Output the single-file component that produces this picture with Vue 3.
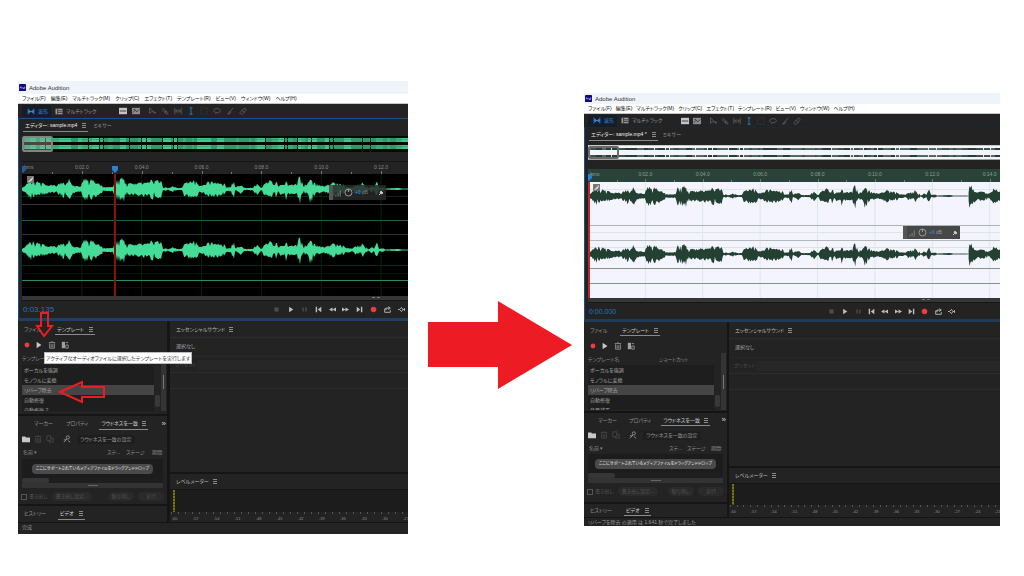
<script setup>
const envelope = [
  [0, 2], [3, 3], [7, 9], [12, 10], [20, 6], [25, 4], [32, 4], [37, 6], [40, 13], [43, 4], [47, 11], [51, 4], [55, 3],
  [59, 3], [61, 10], [65, 11], [72, 9], [79, 4], [82, 2], [91, 2], [93, 10], [102, 12], [105, 6], [112, 6], [120, 7],
  [127, 7], [129, 11], [133, 9], [139, 9], [141, 2], [147, 1], [151, 3], [155, 1], [160, 1], [162, 7], [169, 8], [174, 12],
  [177, 3], [183, 5], [186, 9], [195, 7], [203, 5], [206, 2], [209, 2], [211, 13], [213, 2], [219, 4], [222, 1],
  [231, 1], [234, 7], [239, 1], [243, 7], [250, 11], [256, 6], [260, 5], [264, 11], [267, 5], [274, 5],
  [278, 15], [281, 4], [285, 5], [288, 13], [292, 9], [296, 4], [303, 3], [311, 7], [317, 5], [321, 5], [324, 2],
  [331, 2], [335, 6], [337, 3], [340, 8], [343, 3], [345, 3], [346, 0], [350, 4], [352, 1], [355, 9], [357, 1],
  [361, 2], [364, 0], [376, 1], [380, 0], [395, 0]
]
const secondTake = [[396, 13], [398, 15], [401, 8], [405, 4], [409, 6], [414, 5], [418, 3], [422, 9], [427, 6], [432, 9]]

function wave(points, centre, sx, sy, seed) {
  let s = seed
  const rand = () => {
    s = (s * 16807) % 2147483647
    return s / 2147483647
  }
  const top = []
  const bottom = []
  let k = 0
  const last = points[points.length - 1][0]
  for (let x = points[0][0]; x <= last; x += 1) {
    while (k < points.length - 2 && points[k + 1][0] < x) k++
    const [x0, a0] = points[k]
    const [x1, a1] = points[k + 1]
    const dip = rand() < 0.15 ? 0.5 : 1
    const a = (a0 + ((a1 - a0) * (x - x0)) / (x1 - x0)) * sy * dip
    const up = a * (0.6 + 0.4 * rand()) + 0.3
    const down = a * (0.6 + 0.5 * rand()) + 0.3
    top.push(`${(x * sx).toFixed(1)},${(centre - up).toFixed(1)}`)
    bottom.unshift(`${(x * sx).toFixed(1)},${(centre + down).toFixed(1)}`)
  }
  return [...top, ...bottom].join(' ')
}

function stripes(seed) {
  const out = []
  let s = seed
  let x = 1
  while (x < 600) {
    s = (s * 16807) % 2147483647
    const w = 2 + (s % 7)
    out.push({ x, w, o: 0.75 + (s % 3) / 8 })
    x += w + (s % 4 === 0 ? 1 : 0)
  }
  return out
}

const darkLines = [
  { y: 22, c: '#0b2a0c' }, { y: 30, c: '#383838' }, { y: 46, c: '#1f5c40' }, { y: 60, c: '#303030' },
  { y: 91, c: '#0b2a0c' }, { y: 99, c: '#061506' }, { y: 106, c: '#2c8a5e' }, { y: 113, c: '#061506' }
]
const lightLines = [
  { y: 7, c: '#e0e6ec' }, { y: 43, c: '#aeb4b6' }, { y: 50, c: '#dde5e6' }, { y: 58, c: '#b3b8bc' },
  { y: 65, c: '#dbe6e2' }, { y: 86, c: '#8b938f' }, { y: 101, c: '#7d9488' }
]

const windows = [
  {
    id: 'before', file: 'エディター: sample.mp4', time: '0:03.135', steps: 6.45, levels: 11.6, band: 4,
    lines: darkLines, waves: [wave(envelope, 15, 1, 1, 77), wave(envelope, 76, 1, 1, 77)],
    playhead: 93, status: '完成', tooltip: true, last: '自動修復 2',
    ticks: ['0:02.0', '0:04.0', '0:06.0', '0:08.0', '0:10.0', '0:12.0']
  },
  {
    id: 'after', file: 'エディター: sample.mp4 *', time: '0:00.000', steps: 7.18, levels: 13.6, band: 2,
    lines: lightLines,
    waves: [
      wave(envelope, 14, 0.961, 0.85, 77), wave(secondTake, 14, 0.961, 0.85, 31),
      wave(envelope, 72, 0.961, 0.85, 77), wave(secondTake, 72, 0.961, 0.85, 31)
    ],
    playhead: 1, status: 'リバーブを除去 の適用 は 1.641 秒で完了しました', tooltip: false, last: '音量補正',
    ticks: ['0:02.0', '0:04.0', '0:06.0', '0:08.0', '0:10.0', '0:12.0', '0:14.0']
  }
]

const menus = ['ファイル(F)', '編集(E)', 'マルチトラック(M)', 'クリップ(C)', 'エフェクト(T)', 'テンプレート(R)', 'ビュー(V)', 'ウィンドウ(W)', 'ヘルプ(H)']
const templates = ['ボーカルを強調', 'モノラルに変換', 'リバーブ除去', '自動修復']
const levels = Array.from({ length: 14 }, (_, i) => i * 3 - 60)
const overview = stripes(4242)

const tools = [
  { name: '移動ツール', cls: '', d: 'M2 1v7l2-2h3zM7 7h3M8.500 5.500v3' },
  { name: '切り取りツール', cls: '', d: 'M2 1l5 5M1 3l5 5M6 5l3 3-2 1-2-2z' },
  { name: 'スリップツール', cls: '', d: 'M1 1v8M9 1v8M2 5h6M4 3L2 5l2 2M6 3l2 2-2 2' },
  { name: '時間選択ツール', cls: 'on', d: 'M3 1h4M3 9h4M5 1v8' },
  { name: '長方形選択', cls: 'faint', d: 'M1 1h2M5 1h2M9 1v2M9 5v2M9 9H7M5 9H3M1 9V7M1 5V3' },
  { name: 'なげなわ選択', cls: '', d: 'M3 7C-1 5 1 2 5 2s6 3 2 5H4c-1 0-1 2 0 2' },
  { name: 'ブラシ選択', cls: '', d: 'M9 1L5 6M5 5L2 9l3-1 1-2' },
  { name: 'スポット修復', cls: '', d: 'M2 6l4-4c2-1 4 1 2 3L4 9C2 9 0 8 2 6zM4 4l3 3' }
]
const transport = [
  { name: '停止', cls: 'off', d: 'M2 2h6v6H2z' },
  { name: '再生', cls: '', d: 'M3 1l6 4-6 4z' },
  { name: '一時停止', cls: 'off', d: 'M2 2h2v6H2zM6 2h2v6H6z' },
  { name: '先頭へ', cls: '', d: 'M1 1h2v8H1zM9 1v8L4 5z' },
  { name: '巻き戻し', cls: '', d: 'M5 2v6L0 5zM10 2v6L5 5z' },
  { name: '早送り', cls: '', d: 'M0 2v6l5-3zM5 2v6l5-3z' },
  { name: '末尾へ', cls: '', d: 'M7 1h2v8H7zM1 1v8l5-4z' },
  { name: '録音', cls: 'rec', d: 'M5 1a4 4 0 1 0 .1 0z' },
  { name: 'ループ', cls: 'line', d: 'M3 4H1v5h8V6M3 6V3h5M6 1l3 2-3 2' },
  { name: '選択範囲をスキップ', cls: 'line', d: 'M0 5h2M2 5l3-3 2 3-2 3zM7 5h3M9 3l1 2-1 2' }
]
</script>

<template>
  <main class="page">
    <template v-for="(w, wi) in windows" :key="w.id">
      <svg v-if="wi === 1" class="big-arrow" viewBox="0 0 144 88" aria-hidden="true">
        <path d="M0 21h70V0l74 44-74 44V66H0z" />
      </svg>
      <section class="app" :class="w.id">
        <header class="title">
          <svg viewBox="0 0 8 8"><rect width="8" height="8" rx="1" /><path d="M1 5l1-2 1 2M4.500 3.500v1.500h2V3" /></svg>
          <span>Adobe Audition</span>
        </header>
        <nav class="menu">
          <button v-for="m in menus" :key="m">{{ m }}</button>
        </nav>

        <div class="toolbar">
          <button class="mode active">
            <svg viewBox="0 0 10 10"><path d="M1 1v8M9 1v8M1 5h8M3 3v4M7 3v4" /></svg>波形
          </button>
          <button class="mode multi">
            <svg viewBox="0 0 10 10"><path class="solid" d="M0 1h10v8H0z" /><path class="cut" d="M3 4h7M3 6.500h7M3 1v8" /></svg>マルチトラック
          </button>
          <div class="tools">
            <button class="tool bright" aria-label="スペクトル周波数"><svg viewBox="0 0 10 10"><path class="solid" d="M0 1h10v8H0z" /><path class="cut" d="M1 5h8" /></svg></button>
            <button class="tool mid" aria-label="スペクトルピッチ"><svg viewBox="0 0 10 10"><path class="solid" d="M0 1h10v8H0z" /><path class="cut" d="M1 7l3-3 2 2 3-3M2 3h2" /></svg></button>
          </div>
          <div class="tools second">
            <button v-for="t in tools" :key="t.name" class="tool" :class="t.cls" :aria-label="t.name">
              <svg viewBox="0 0 10 10"><path :d="t.d" /></svg>
            </button>
          </div>
        </div>

        <div class="editor">
          <div class="tabs editor-tabs">
            <button class="tab current">{{ w.file }}<i class="burger"></i></button>
            <button class="tab dim">ミキサー</button>
          </div>
          <div class="overview">
            <svg width="100%" height="100%">
              <g v-for="(s, i) in overview" :key="i" :opacity="s.o">
                <rect :x="s.x" y="2" :width="s.w" :height="w.band" />
                <rect :x="s.x" y="9" :width="s.w" :height="w.band" />
              </g>
              <path d="M0 3.500h800M0 10.500h800" />
            </svg>
            <span class="view-box"></span>
          </div>
          <div class="ruler" :style="{ '--steps': w.steps }">
            <span class="hms">hms</span>
            <i class="half"></i>
            <span v-for="t in w.ticks" :key="t" class="tick">{{ t }}</span>
            <svg class="marker start" viewBox="0 0 6 7"><path d="M0 0h6v4L3 7 0 4z" /></svg>
            <svg v-if="w.id === 'before'" class="marker" viewBox="0 0 6 7" :style="{ left: w.playhead - 3 + 'px' }"><path d="M0 0h6v4L3 7 0 4z" /></svg>
          </div>
          <div class="wave">
            <svg width="100%" height="100%">
              <line v-for="n in 7" :key="n" class="grid" :x1="(n * 100) / w.steps + '%'" :x2="(n * 100) / w.steps + '%'" y1="0" y2="100%" />
              <line v-for="l in w.lines" :key="l.y" x1="0" x2="100%" :y1="l.y + 0.5" :y2="l.y + 0.5" :stroke="l.c" />
              <line v-for="y in w.id === 'before' ? [15, 76] : [14, 72]" :key="'c' + y" class="centre" x1="0" x2="100%" :y1="y" :y2="y" />
              <polygon v-for="(p, i) in w.waves" :key="i" :points="p" />
              <line class="playhead" :x1="w.playhead" :x2="w.playhead" y1="0" y2="100%" />
              <g class="fade"><rect x="5" y="2" width="7" height="7" /><path d="M6 8C8 8 11 6 11 3" /></g>
            </svg>
            <div class="hud">
              <i class="grip"></i>
              <svg class="bars" viewBox="0 0 8 8"><path d="M1 6v2M3.500 4v4M6 1v7" /></svg>
              <svg class="knob" viewBox="0 0 9 9"><circle cx="4.500" cy="4.500" r="3.500" /><path d="M4.500 1v3" /></svg>
              <span class="db"><b>+0</b> dB</span>
              <svg class="pin" viewBox="0 0 6 6"><path d="M1 5l2-2M3 1l2 2-2 1-1-1z" /></svg>
            </div>
          </div>
          <div class="hscroll"><i></i></div>
          <div class="transport">
            <output>{{ w.time }}</output>
            <div class="keys">
              <button v-for="b in transport" :key="b.name" :class="b.cls" :aria-label="b.name">
                <svg viewBox="0 0 10 10"><path :d="b.d" /></svg>
              </button>
            </div>
          </div>
        </div>

        <div class="lower">
          <div class="left">
            <section class="panel templates">
              <div class="tabs">
                <button class="tab dim">ファイル</button>
                <button class="tab current">テンプレート<i class="burger"></i></button>
              </div>
              <div class="icons">
                <button class="rec" aria-label="記録"><svg viewBox="0 0 10 10"><circle cx="5" cy="5" r="4" /></svg></button>
                <button class="run" aria-label="実行"><svg viewBox="0 0 10 10"><path d="M2 1l6 4-6 4z" /></svg></button>
                <button class="trash" aria-label="削除"><svg viewBox="0 0 10 10"><path d="M1 2h8M4 1h2M2 3v6h6V3M4 4v4M6 4v4" /></svg></button>
                <button class="batch" aria-label="バッチ処理"><svg viewBox="0 0 10 10"><path class="solid" d="M1 1h4v8H1z" /><path d="M6 2h3M6 5h3v4H6z" /></svg></button>
              </div>
              <div class="list-wrap">
                <div class="list-main">
                  <div class="list-head"><span>テンプレート名</span><span>ショートカット</span></div>
                  <div class="list-body">
                    <ul>
                      <li v-for="(t, i) in templates" :key="t" :class="{ selected: i === 2 }">{{ t }}</li>
                      <li>{{ w.last }}</li>
                    </ul>
                    <i class="thumb"></i>
                  </div>
                </div>
                <i class="outer-scroll"></i>
              </div>
            </section>

            <section class="panel loudness">
              <div class="tabs">
                <button class="tab dim">マーカー</button>
                <button class="tab dim">プロパティ</button>
                <button class="tab current">ラウドネスを一致<i class="burger"></i></button>
                <button class="tab more">»</button>
              </div>
              <div class="icons">
                <button class="folder" aria-label="開く"><svg viewBox="0 0 10 10"><path d="M0 2h4l1 1h5v6H0z" /></svg></button>
                <button class="trash weak" aria-label="削除"><svg viewBox="0 0 10 10"><path d="M1 2h8M4 1h2M2 3v6h6V3M4 4v4M6 4v4" /></svg></button>
                <button class="trash weak" aria-label="複製"><svg viewBox="0 0 10 10"><path d="M1 1h5v6H1zM4 7v2h5V4H6" /></svg></button>
                <button class="scan" aria-label="スキャン"><svg viewBox="0 0 10 10"><circle cx="6" cy="3" r="2" /><path d="M5 5L1 9M1 6h3M6 7l3 2" /></svg></button>
                <button class="setting">ラウドネスを一致の設定</button>
              </div>
              <div class="columns"><span>名前 ▾</span><span>ステ...</span><span>ステージ</span><span>期間:</span></div>
              <div class="drop"><p>ここにサポートされているメディアファイルをドラッグアンドドロップ</p></div>
              <div class="drop-scroll"><i></i></div>
              <div class="bar"></div>
              <div class="actions">
                <label><input type="checkbox" disabled>書き出し</label>
                <button disabled>書き出し設定...</button>
                <button class="push" disabled>取り消し</button>
                <button disabled>実行</button>
              </div>
            </section>

            <section class="panel history">
              <div class="tabs">
                <button class="tab dim">ヒストリー</button>
                <button class="tab current">ビデオ<i class="burger"></i></button>
              </div>
            </section>
          </div>

          <div class="right">
            <section class="panel sound">
              <div class="heading">エッセンシャルサウンド<i class="burger"></i></div>
              <p class="none">選択なし</p>
              <label class="preset"><span>プリセット:</span><select disabled><option></option></select></label>
              <div class="strip"></div>
            </section>
            <section class="panel meter">
              <div class="heading">レベルメーター<i class="burger"></i></div>
              <div class="meter-track"><i></i></div>
              <div class="scale" :style="{ '--levels': w.levels }">
                <span v-for="l in levels" :key="l">{{ l }}</span>
              </div>
            </section>
          </div>
        </div>
        <footer>{{ w.status }}</footer>

        <template v-if="w.tooltip">
          <div class="tooltip" role="tooltip">アクティブなオーディオファイルに選択したテンプレートを実行します</div>
          <svg class="notes" width="100" height="100" aria-hidden="true">
            <path d="M8 3h7v13h4l-8 10-7-10h4z" />
            <path d="M27 82l22-10v5h22v10H49v5z" />
          </svg>
        </template>
      </section>
    </template>
  </main>
</template>

<style>
body {
  margin: 0;
  background: #fff;
}
</style>

<style scoped>
* {
  box-sizing: border-box;
}
.page {
  display: grid;
  grid-template-columns: 390fr 176fr 416fr;
  align-items: start;
  padding: 81px 24px 40px 18px;
  font-family: "Liberation Sans", "Noto Sans CJK JP", sans-serif;
  font-feature-settings: "palt";
  font-size: 5px;
  line-height: 1;
  color: #c0c0c0;
}
button {
  display: flex;
  align-items: center;
  padding: 0;
  border: 0;
  background: none;
  color: inherit;
  font: inherit;
  font-feature-settings: inherit;
  white-space: nowrap;
}
p,
ul {
  margin: 0;
  padding: 0;
  list-style: none;
}
svg {
  display: block;
  flex: none;
}
.big-arrow {
  width: 144px;
  height: 88px;
  margin: 220px 0 0 20px;
  fill: #ed1c24;
}
.app {
  --title: 13px;
  --tool: 14px;
  --over: 16px;
  --gap: 9px;
  --wave: 122px;
  --trans: 17px;
  --lower: 201px;
  --side: 149px;
  --split: 3px;
  --foot: 12px;
  position: relative;
  min-width: 0;
  overflow: hidden;
  background: #232323;
}
.after {
  --title: 11px;
  --tool: 13px;
  --over: 15px;
  --gap: 9px;
  --wave: 116px;
  --trans: 16px;
  --lower: 195px;
  --side: 143px;
  --split: 2px;
  --foot: 9px;
  margin-top: 12px;
}
.title {
  display: flex;
  align-items: center;
  gap: 3px;
  height: var(--title);
  padding-left: 1px;
  background: #eff3fa;
  color: #333;
  font-size: 6px;
}
.title svg {
  width: 7px;
  height: 7px;
  fill: #120a7c;
}
.title path {
  fill: none;
  stroke: #a9a4ff;
  stroke-width: 1;
}
.menu {
  display: flex;
  align-items: center;
  gap: 5px;
  height: 10px;
  padding-left: 4px;
  border-bottom: 1px solid #c4c6c8;
  background: #fff;
  color: #111;
}
.after .menu {
  gap: 4px;
}
.toolbar {
  display: flex;
  align-items: center;
  height: var(--tool);
  padding-left: 4px;
}
.mode {
  gap: 3px;
  height: 12px;
  padding: 0 4px;
  color: #9a9a9a;
}
.mode svg {
  width: 8px;
  height: 7px;
  fill: none;
  stroke: currentColor;
  stroke-width: 1.5;
}
.mode.active {
  padding: 0 3px 0 5px;
  background: #161d27;
  color: #2f86d8;
}
.solid {
  fill: currentColor;
  stroke: none;
}
.mode .cut,
.cut {
  fill: none;
  stroke: #232323;
  stroke-width: 1;
}
.tools {
  display: flex;
  gap: 5px;
  margin-left: 19px;
}
.second {
  margin-left: 8px;
}
.after .tools {
  gap: 4px;
  margin-left: 15px;
}
.after .second {
  margin-left: 8px;
}
.tool {
  color: #626262;
}
.tool svg {
  width: 8px;
  height: 8px;
  fill: none;
  stroke: currentColor;
}
.bright {
  color: #c4c4c4;
}
.mid {
  color: #8c8c8c;
}
.on {
  color: #2f86d8;
}
.faint {
  color: #3e3e3e;
}
.editor {
  border-top: 1px solid #1d4f85;
  border-bottom: 3px solid #1f3f66;
  border-left: 1px solid #1d4f85;
}
.after .editor {
  border-top-color: #14293c;
  border-bottom-color: #213a55;
}
.tabs {
  display: flex;
  align-items: center;
}
.tab {
  gap: 5px;
  height: 11px;
  padding: 0 2px;
  border-bottom: 1px solid transparent;
  color: #d0d0d0;
}
.current {
  border-bottom-color: #8a8a8a;
}
.dim {
  color: #929292;
}
.burger {
  width: 4px;
  height: 5px;
  border-top: 1px solid #8a8a8a;
  border-bottom: 1px solid #8a8a8a;
  background: linear-gradient(#8a8a8a, #8a8a8a) center / 100% 1px no-repeat;
}
.editor-tabs {
  gap: 3px;
  height: 17px;
  padding: 0 0 3px 4px;
}
.editor-tabs .current {
  color: #f0f0f0;
}
.overview {
  position: relative;
  height: var(--over);
  margin-left: 3px;
  background: #020a05;
  fill: #3ecb8a;
  stroke: #2b9a68;
}
.overview g {
  stroke: none;
}
.overview path {
  stroke-opacity: 0.6;
}
.after .overview {
  border-top: 1px solid #c8c8c8;
  border-bottom: 1px solid #a2a2a2;
  background: #f4f4ff;
  fill: #234033;
  stroke: #234033;
}
.after .overview path {
  stroke-opacity: 0.2;
}
.view-box {
  position: absolute;
  top: 0;
  left: 0;
  width: 31px;
  height: 100%;
  border: 2px solid #7d8682;
  border-radius: 2px;
  background: rgba(160, 170, 165, 0.4);
}
.after .view-box {
  border-color: #6a6a6a;
  background: none;
}
.ruler {
  position: relative;
  display: flex;
  height: 13px;
  margin: var(--gap) 0 0 3px;
  border-top: 1px solid #151515;
  overflow: hidden;
  color: #8a8a8a;
}
.after .ruler {
  border-top: 0;
  background: #294339;
  color: #8ba094;
}
.hms {
  position: absolute;
  top: 3px;
  left: 2px;
}
.half {
  flex: 0 0 calc(50% / var(--steps));
}
.tick {
  position: relative;
  flex: 0 0 calc(100% / var(--steps));
  padding-top: 3px;
  text-align: center;
}
.tick::before,
.tick::after {
  position: absolute;
  bottom: 0;
  left: 50%;
  width: 1px;
  height: 3px;
  background: #777;
  content: "";
}
.tick::after {
  left: 0;
  height: 2px;
}
.marker {
  position: absolute;
  bottom: 1px;
  width: 6px;
  height: 7px;
  fill: #2482dd;
}
.start {
  left: -2px;
  fill: #1f5d9c;
}
.after .marker {
  fill: #2482dd;
}
.wave {
  position: relative;
  height: var(--wave);
  margin-left: 3px;
  background: #000;
  fill: #45dc98;
}
.after .wave {
  background: #f4f4ff;
  fill: #234033;
}
.grid {
  stroke: #062406;
}
.after .grid {
  stroke: #dce9e6;
}
.centre {
  stroke: #1f6e4a;
}
.after .centre {
  stroke: #9aa3a3;
}
.playhead {
  stroke: #8c1010;
  stroke-width: 2;
}
.after .playhead {
  stroke: #c02828;
}
.fade rect {
  fill: #777;
}
.fade path {
  fill: #eee;
}
.hud {
  position: absolute;
  top: 11px;
  right: 22px;
  display: flex;
  align-items: center;
  gap: 2px;
  width: 57px;
  height: 15px;
  padding-right: 2px;
  background: rgba(40, 40, 40, 0.85);
  color: #777;
}
.after .hud {
  top: 44px;
  right: 40px;
  height: 13px;
  background: #474747;
  color: #999;
}
.grip {
  align-self: stretch;
  width: 4px;
  background: #555;
}
.bars {
  width: 7px;
  height: 8px;
  stroke: #888;
}
.knob {
  width: 9px;
  height: 9px;
  fill: none;
  stroke: #999;
}
.db b {
  color: #2f80cc;
}
.pin {
  width: 6px;
  height: 6px;
  margin-left: auto;
  fill: #ccc;
  stroke: #ccc;
}
.hscroll {
  height: 5px;
  margin-left: 3px;
  border-bottom: 1px solid #161616;
  background: #363636;
}
.hscroll i {
  display: block;
  width: 8px;
  height: 2px;
  margin-left: auto;
  margin-right: 28px;
  border-bottom: 1px dashed #777;
}
.after .hscroll i {
  margin-right: 70px;
}
.transport {
  display: flex;
  align-items: center;
  justify-content: space-between;
  height: var(--trans);
  padding-left: 4px;
}
.transport output {
  color: #2273c0;
  font-size: 8px;
}
.after .transport output {
  font-size: 7px;
}
.keys {
  display: flex;
  width: 138px;
}
.after .keys {
  width: 133px;
  margin-right: 42px;
}
.keys button {
  flex: 1;
  justify-content: center;
}
.keys svg {
  width: 7px;
  height: 7px;
  fill: #bdbdbd;
}
.keys .off svg {
  fill: #4c4c4c;
}
.keys .rec svg,
.icons .rec svg {
  fill: #f13b3b;
}
.keys .line svg {
  fill: none;
  stroke: #bdbdbd;
  stroke-width: 1.3;
}
.lower {
  display: grid;
  grid-template-columns: var(--side) minmax(0, 1fr);
  gap: var(--split);
  height: var(--lower);
  background: #151515;
}
.left {
  display: grid;
  grid-template-rows: 93px 88px 1fr;
  gap: 2px;
}
.after .left {
  grid-template-rows: 89px 89px 1fr;
}
.right {
  display: grid;
  grid-template-rows: 1fr 48px;
  gap: 2px;
}
.after .right {
  grid-template-rows: 1fr 49px;
}
.panel {
  display: flex;
  flex-direction: column;
  min-width: 0;
  min-height: 0;
  overflow: hidden;
  background: #232323;
}
.templates .tabs {
  gap: 12px;
  flex: 0 0 17px;
  padding-left: 4px;
}
.after .templates .tabs {
  gap: 11px;
}
.icons {
  display: flex;
  align-items: center;
  flex: 0 0 14px;
  gap: 5px;
  padding-left: 6px;
}
.icons svg {
  width: 8px;
  height: 8px;
  fill: #c8c8c8;
}
.icons .rec svg {
  width: 6px;
  height: 6px;
}
.icons .trash svg,
.icons .batch svg,
.icons .scan svg {
  fill: none;
  stroke: #a0a0a0;
}
.icons .batch {
  color: #a0a0a0;
}
.icons .weak svg {
  stroke: #4a4a4a;
}
.list-wrap {
  display: flex;
  flex: 1;
  gap: 1px;
  min-height: 0;
  padding: 0 1px 3px 4px;
}
.after .list-wrap {
  padding-bottom: 1px;
}
.list-main {
  display: flex;
  flex: 1;
  flex-direction: column;
  min-height: 0;
}
.list-head {
  display: grid;
  grid-template-columns: 71px 1fr;
  align-items: center;
  flex: 0 0 13px;
  color: #868686;
}
.after .list-head {
  flex-basis: 12px;
}
.list-body {
  display: flex;
  flex: 1;
  gap: 1px;
  min-height: 0;
  overflow: hidden;
}
.list-body ul {
  flex: 1;
  background: #1e1e1e;
}
.list-body li {
  height: 10px;
  padding-left: 2px;
  line-height: 10px;
  color: #a2a2a2;
}
.list-body .selected {
  background: #454545;
}
.thumb {
  width: 5px;
  height: 12px;
  margin-top: 30px;
  border-radius: 2px;
  background: #383838;
}
.outer-scroll {
  width: 5px;
  background: linear-gradient(#777, #777) center / 1px 14px no-repeat #343434;
}
.loudness .tabs {
  flex: 0 0 16px;
  gap: 9px;
  padding: 0 1px 0 14px;
}
.after .loudness .tabs {
  flex-basis: 15px;
  gap: 8px;
  padding-left: 12px;
}
.loudness .tab {
  gap: 4px;
}
.loudness .more {
  margin-left: auto;
  padding: 0;
  font-size: 8px;
}
.loudness .icons {
  padding-left: 4px;
  gap: 4px;
}
.loudness .scan {
  margin-left: 5px;
}
.setting {
  height: 9px;
  margin-left: 2px;
  padding: 0 3px;
  background: #1e1e1e;
  color: #9c9c9c;
}
.columns {
  display: grid;
  grid-template-columns: 84px 19px 26px 1fr;
  align-items: center;
  flex: 0 0 13px;
  padding-left: 5px;
  color: #8c8c8c;
}
.after .columns {
  flex-basis: 12px;
  grid-template-columns: 80px 18px 24px 1fr;
}
.drop {
  display: flex;
  align-items: center;
  justify-content: center;
  flex: 0 0 19px;
  margin: 0 4px;
  background: #1c1c1c;
}
.drop p {
  padding: 3px 4px;
  border-radius: 4px;
  background: #4a4a4a;
  color: #f0f0f0;
  font-size: 4px;
  line-height: 4px;
  white-space: nowrap;
}
.drop-scroll {
  flex: 0 0 5px;
  margin: 0 4px;
  background: #1e1e1e;
}
.drop-scroll i {
  display: block;
  width: 27px;
  height: 5px;
  border-radius: 2px;
  background: #363636;
}
.bar {
  flex: 0 0 6px;
  margin: 0 4px;
  border-bottom: 1px solid #232323;
  background: linear-gradient(#666, #666) center / 10px 1px no-repeat #333;
}
.actions {
  display: flex;
  align-items: center;
  flex: 0 0 15px;
  gap: 4px;
  padding: 0 3px;
  color: #555;
}
.actions label {
  display: flex;
  align-items: center;
  gap: 2px;
  white-space: nowrap;
}
.actions input {
  width: 6px;
  height: 6px;
  margin: 0;
  border: 1px solid #555;
  appearance: none;
}
.actions button {
  height: 9px;
  padding: 0 4px;
  border-radius: 5px;
  background: #2a2a2a;
}
.actions button:last-child {
  padding: 0 8px;
}
.actions .push {
  margin-left: auto;
}
.history .tabs {
  flex: 1;
  gap: 10px;
  padding-left: 4px;
}
.heading {
  display: flex;
  align-items: center;
  flex: 0 0 17px;
  gap: 4px;
  padding-left: 6px;
  border-bottom: 1px solid #2b2b2b;
  color: #bcbcbc;
}
.none {
  flex: 0 0 18px;
  padding-left: 6px;
  color: #a6a6a6;
  line-height: 17px;
}
.preset {
  display: flex;
  align-items: center;
  flex: 0 0 17px;
  border-top: 1px solid #272727;
  border-bottom: 1px solid #2b2b2b;
  color: #4c4c4c;
}
.preset span {
  flex: 0 0 28px;
  padding-left: 5px;
  white-space: nowrap;
}
.preset select {
  flex: 1;
  height: 10px;
  border: 0;
  border-radius: 0;
  background: #2a2a2a;
  appearance: none;
}
.strip {
  flex: 0 0 16px;
  border-bottom: 1px solid #2b2b2b;
}
.meter .heading {
  flex-basis: 16px;
  border-bottom: 1px solid #151515;
}
.meter-track {
  flex: 0 0 22px;
  padding-left: 3px;
  background: #1c1c1c;
}
.after .meter-track {
  flex-basis: 21px;
}
.meter-track i {
  display: block;
  width: 2px;
  height: 100%;
  background: repeating-linear-gradient(#77770f 0 2px, #4a4a0c 2px 3px);
}
.scale {
  display: flex;
  flex: 1;
  margin-left: -6px;
  overflow: hidden;
  color: #8a8a8a;
  font-size: 4px;
}
.scale span {
  position: relative;
  flex: 0 0 calc(100% / var(--levels));
  padding-top: 5px;
  text-align: center;
}
.scale span::before {
  position: absolute;
  top: 0;
  left: 0;
  right: 0;
  height: 2px;
  background: repeating-linear-gradient(90deg, #555 0 1px, transparent 1px 7px);
  content: "";
}
footer {
  height: var(--foot);
  padding-left: 4px;
  border-top: 1px solid #151515;
  color: #989898;
  line-height: 8px;
  white-space: nowrap;
}
.tooltip {
  position: absolute;
  top: 271px;
  left: 26px;
  height: 12px;
  padding: 0 1px;
  border: 1px solid #bbb;
  background: #fff;
  color: #333;
  line-height: 10px;
  white-space: nowrap;
}
.notes {
  position: absolute;
  top: 229px;
  left: 15px;
  fill: none;
  stroke: #ed1c24;
  stroke-width: 2;
}
</style>
